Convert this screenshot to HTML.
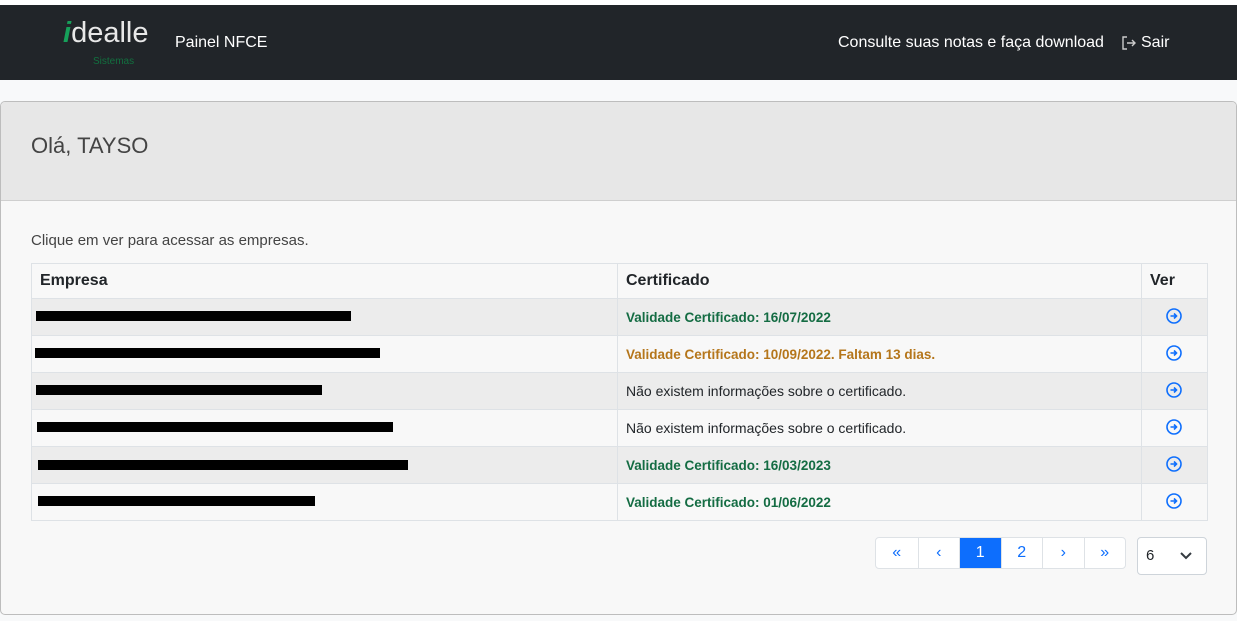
<!DOCTYPE html>
<html><head><meta charset="utf-8"><style>
*{box-sizing:border-box;margin:0;padding:0}
body{width:1237px;height:621px;background:#f8f9fa;font-family:"Liberation Sans",Arial,sans-serif;color:#212529;position:relative;overflow:hidden}
.nav{position:absolute;top:5px;left:0;width:1237px;height:75px;background:#212529}
.top{position:absolute;top:0;left:0;width:1237px;height:5px;background:#fff}
.card{position:absolute;left:0;top:101px;width:1237px;height:514px;border:1px solid #bdbdbd;border-radius:5px;background:#f8f8f8;overflow:hidden}
.ch{height:99px;background:#e7e7e7;border-bottom:1px solid #cfcfcf;padding:31px 30px;font-size:22px;color:#444}
table{position:absolute;left:30px;top:161px;width:1177px;border-collapse:collapse;font-size:14px}
td,th{border:1px solid #dee2e6;height:37px;padding:0 8px;text-align:left;vertical-align:middle}
th{font-size:16px;height:35px;font-weight:bold}
tr.s td{background:#ececec}
tr.w td{background:#f8f8f8}
.g{color:#146c43;font-weight:bold;font-size:13.5px}
.o{color:#b5761b;font-weight:bold;font-size:13.5px}
.bar{position:absolute;height:10px;background:#000}
.pg{position:absolute;left:875px;top:537px;height:32px;display:flex;border:1px solid #dee2e6;border-radius:4px;background:#fff}
.pg div{width:41.5px;text-align:center;line-height:30px;color:#0d6efd;border-left:1px solid #dee2e6;font-size:16px}
.pg div:first-child{border-left:none}
.pg .a{background:#0d6efd;color:#fff}
</style></head><body>
<div class="top"></div>
<div class="nav">
 <div style="position:absolute;left:63px;top:12px;font-size:29px;color:#e8e8e8"><span style="color:#16a05a;font-style:italic;font-weight:bold">i</span>dealle</div>
 <div style="position:absolute;left:93px;top:51px;font-size:10px;color:#12703f">Sistemas</div>
 <div style="position:absolute;left:175px;top:29px;font-size:16px;color:#fff">Painel NFCE</div>
 <div style="position:absolute;left:838px;top:29px;font-size:16px;color:#fff">Consulte suas notas e faça download</div>
 <svg style="position:absolute;left:1121px;top:30px" width="16" height="16" viewBox="0 0 16 16" fill="none" stroke="#ccc" stroke-width="1.4"><path d="M6 2H2v12h4M6 8h8M11 5l3 3-3 3"/></svg>
 <div style="position:absolute;left:1141px;top:29px;font-size:16px;color:#fff">Sair</div>
</div>
<div class="card">
 <div class="ch">Olá, TAYSO</div>
 <div style="position:absolute;left:30px;top:130px;font-size:15px;color:#444">Clique em ver para acessar as empresas.</div>
 <table>
  <tr class="w"><th style="width:586px">Empresa</th><th style="width:524px">Certificado</th><th>Ver</th></tr>
  <tr class="s"><td></td><td class="g">Validade Certificado: 16/07/2022</td><td></td></tr>
  <tr class="w"><td></td><td class="o">Validade Certificado: 10/09/2022. Faltam 13 dias.</td><td></td></tr>
  <tr class="s"><td></td><td>Não existem informações sobre o certificado.</td><td></td></tr>
  <tr class="w"><td></td><td>Não existem informações sobre o certificado.</td><td></td></tr>
  <tr class="s"><td></td><td class="g">Validade Certificado: 16/03/2023</td><td></td></tr>
  <tr class="w"><td></td><td class="g">Validade Certificado: 01/06/2022</td><td></td></tr>
 </table>
</div>
<div class="bar" style="left:36px;top:311px;width:315px"></div>
<div class="bar" style="left:35px;top:348px;width:345px"></div>
<div class="bar" style="left:36px;top:385px;width:286px"></div>
<div class="bar" style="left:37px;top:422px;width:356px"></div>
<div class="bar" style="left:38px;top:460px;width:370px"></div>
<div class="bar" style="left:38px;top:496px;width:277px"></div>
<svg width="0" height="0" style="position:absolute"><defs><g id="ic" fill="none" stroke="#0d6efd" stroke-width="1.6"><circle cx="8" cy="8" r="7"/><path d="M4.5 8h6M8 5.5 10.5 8 8 10.5"/></g></defs></svg>
<svg style="position:absolute;left:1166px;top:308px" width="16" height="16"><use href="#ic"/></svg>
<svg style="position:absolute;left:1166px;top:345px" width="16" height="16"><use href="#ic"/></svg>
<svg style="position:absolute;left:1166px;top:382px" width="16" height="16"><use href="#ic"/></svg>
<svg style="position:absolute;left:1166px;top:419px" width="16" height="16"><use href="#ic"/></svg>
<svg style="position:absolute;left:1166px;top:456px" width="16" height="16"><use href="#ic"/></svg>
<svg style="position:absolute;left:1166px;top:493px" width="16" height="16"><use href="#ic"/></svg>
<div class="pg"><div>«</div><div>‹</div><div class="a">1</div><div>2</div><div>›</div><div>»</div></div>
<div style="position:absolute;left:1137px;top:537px;width:70px;height:38px;border:1px solid #ced4da;border-radius:4px;background:#fff;font-size:15px;padding:9px 8px">6
 <svg style="position:absolute;left:42px;top:14px" width="12" height="8" viewBox="0 0 12 8" fill="none" stroke="#343a40" stroke-width="2"><path d="M1 1l5 5 5-5"/></svg></div>
</body></html>
